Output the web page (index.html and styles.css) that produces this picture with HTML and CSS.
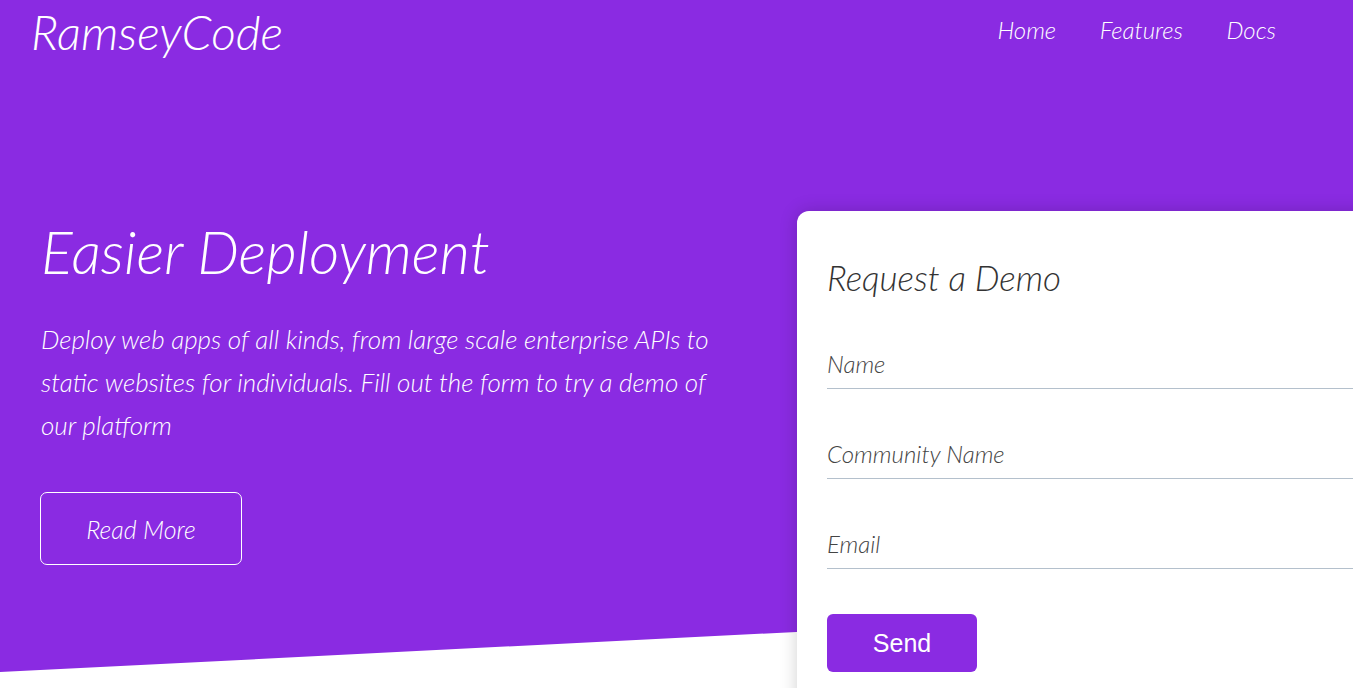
FILE: index.html
```html
<!DOCTYPE html>
<html lang="en">
<head>
<meta charset="utf-8">
<title>RamseyCode</title>
<link rel="stylesheet" href="styles.css">
</head>
<body>
<div class="page">
  <header class="topbar">
    <div class="logo">RamseyCode</div>
    <nav class="nav">
      <a href="#">Home</a>
      <a href="#">Features</a>
      <a href="#">Docs</a>
    </nav>
  </header>
  <section class="hero">
    <div class="intro">
      <h1 class="intro-title">Easier Deployment</h1>
      <p class="intro-text">Deploy web apps of all kinds, from large scale enterprise APIs to static websites for individuals. Fill out the form to try a demo of our platform</p>
      <a class="btn-outline" href="#">Read More</a>
    </div>
    <div class="card">
      <h2 class="card-title">Request a Demo</h2>
      <form class="form">
        <input class="field" type="text" placeholder="Name">
        <input class="field" type="text" placeholder="Community Name">
        <input class="field" type="email" placeholder="Email">
        <button class="btn-send" type="button">Send</button>
      </form>
    </div>
  </section>
</div>
</body>
</html>
```
FILE: styles.css
```css
* { box-sizing: border-box; }
html, body { margin: 0; padding: 0; }
body {
  font-family: Lato, "Open Sans", sans-serif;
  font-weight: 300;
  font-style: italic;
  background: #fff;
}
.page {
  position: relative;
  height: 688px;
  overflow: hidden;
}
.page::before {
  content: "";
  position: absolute;
  inset: 0;
  background: #8a2be2;
  clip-path: polygon(0 0, 100% 0, 100% 604px, 0 672px);
  z-index: 0;
}
.topbar, .hero { position: relative; z-index: 1; }
.topbar {
  display: flex;
  justify-content: space-between;
  align-items: flex-start;
  padding: 0 77px 0 31px;
  color: #fff;
}
.logo {
  font-size: 48px;
  line-height: 56px;
  padding-top: 4px;
}
.nav {
  display: flex;
  gap: 43.5px;
  padding-top: 14px;
}
.nav a {
  color: #fff;
  text-decoration: none;
  font-size: 24px;
  line-height: 32px;
}
.hero {
  display: grid;
  grid-template-columns: 797px 640px;
  margin-top: 151px;
}
.intro {
  padding: 5px 0 0 41px;
  color: #fff;
}
.intro-title {
  margin: 0;
  font-weight: 300;
  font-size: 59px;
  line-height: 72px;
}
.intro-text {
  margin: 30px 0 0;
  width: 700px;
  font-size: 26px;
  line-height: 43px;
}
.btn-outline {
  display: flex;
  align-items: center;
  justify-content: center;
  margin: 45px 0 0 -1px;
  width: 202px;
  height: 73px;
  border: 1px solid #fff;
  border-radius: 7px;
  color: #fff;
  text-decoration: none;
  font-size: 25px;
}
.card {
  background: #fff;
  border-radius: 12px 0 0 0;
  box-shadow: 0 0 18px rgba(0, 0, 0, 0.18);
  padding: 40px 0 40px 30px;
  min-height: 520px;
}
.card-title {
  margin: 0;
  font-weight: 300;
  font-size: 35px;
  line-height: 52px;
  color: #333;
}
.form {
  display: flex;
  flex-direction: column;
  margin-top: 45px;
}
.field {
  display: block;
  width: 100%;
  height: 41px;
  border: 0;
  border-bottom: 1px solid #b4c0cc;
  padding: 0 0 10px;
  margin-bottom: 49px;
  font-family: inherit;
  font-weight: 300;
  font-style: italic;
  font-size: 24px;
  line-height: 30px;
  color: #444;
  background: transparent;
  outline: none;
}
.field::placeholder { color: #444; }
.btn-send {
  width: 150px;
  height: 58px;
  margin-top: -4px;
  border: 0;
  border-radius: 6px;
  background: #8a2be2;
  color: #fff;
  font-family: "Liberation Sans", Arial, sans-serif;
  font-style: normal;
  font-weight: 400;
  font-size: 25px;
}
```
